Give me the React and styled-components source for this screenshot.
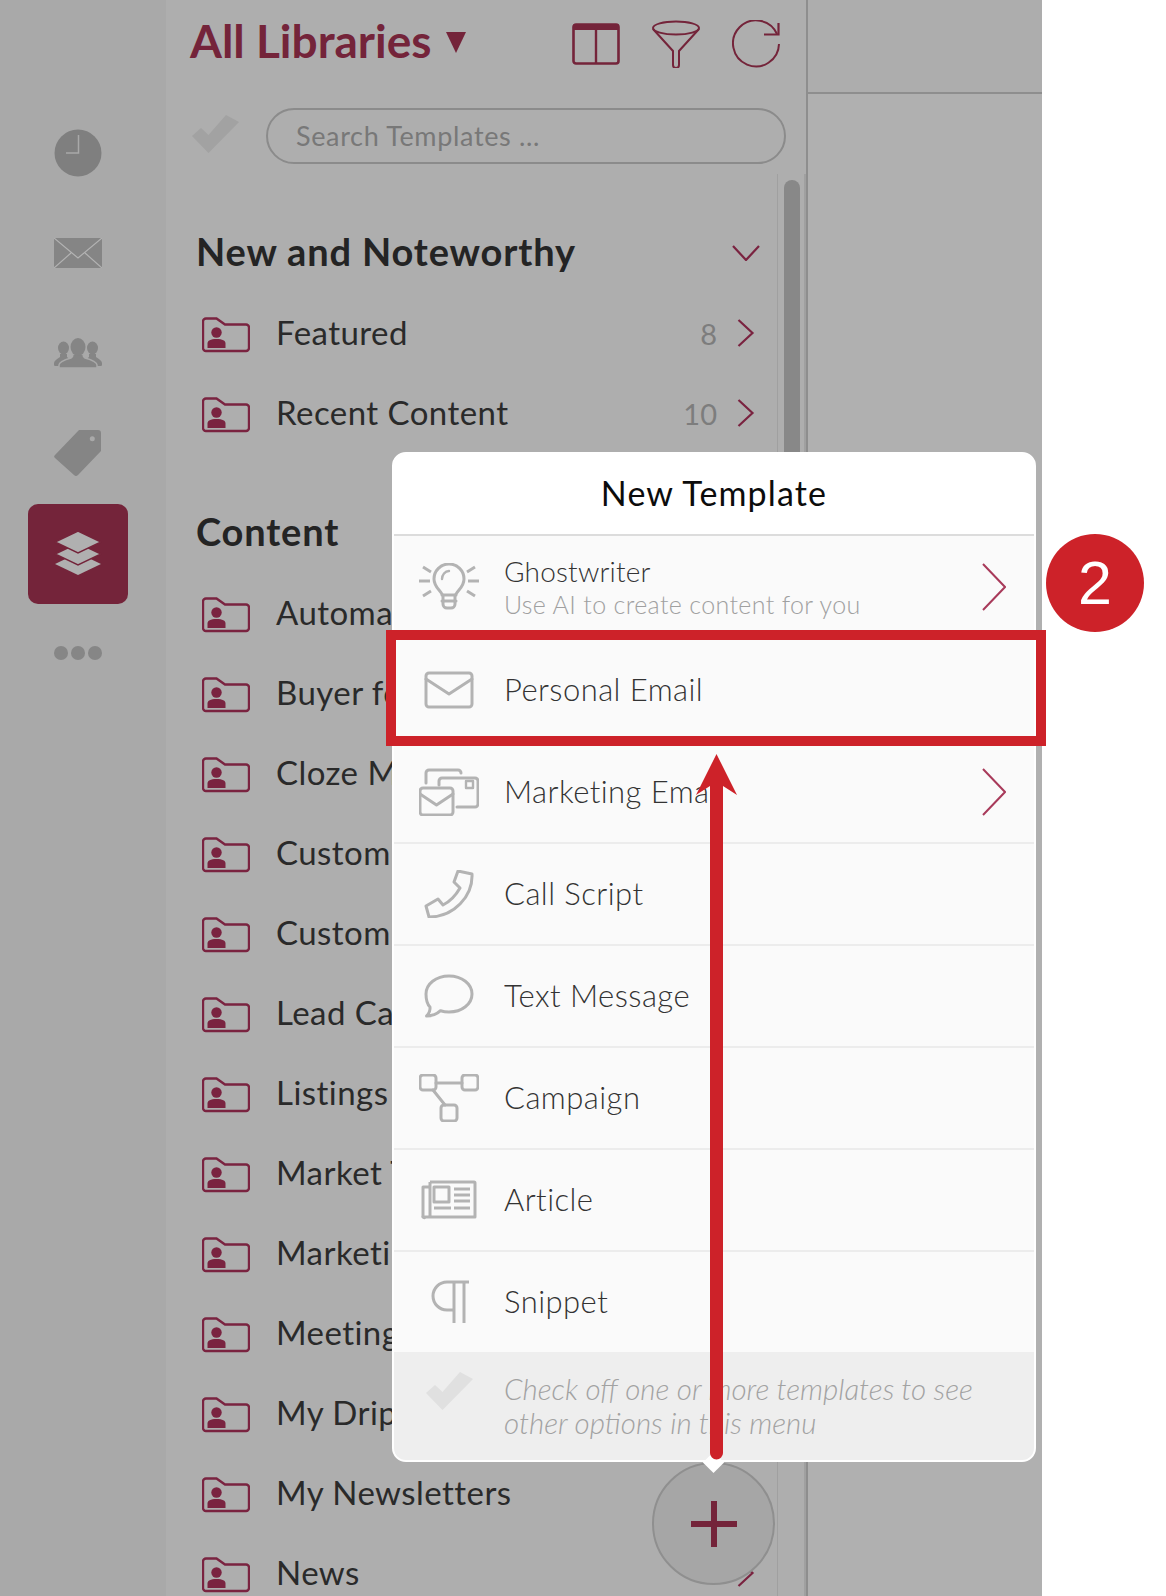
import React from "react";
import styled, { createGlobalStyle } from "styled-components";

const ACCENT = "#74243a";
const FONT = `"Lato", "Open Sans", "Liberation Sans", sans-serif`;

const Global = createGlobalStyle`
  html, body { margin: 0; padding: 0; background: #fff; }
  #root { width: 1166px; height: 1596px; }
`;

const Page = styled.div`
  position: relative;
  width: 1166px;
  height: 1596px;
  overflow: hidden;
  font-family: ${FONT};
  background: #fff;
`;
const Shell = styled.div`
  display: flex;
  width: 1042px;
  height: 1596px;
`;
const Rail = styled.nav`
  width: 166px;
  flex: none;
  box-sizing: border-box;
  padding: 103px 10px 0 0;
  background: #a9a9a9;
  display: flex;
  flex-direction: column;
  align-items: center;
`;
const RailSlot = styled.div`
  width: 100px;
  height: 100px;
  flex: none;
  margin-top: ${(p) => (p.$active ? 1 : 0)}px;
  display: flex;
  align-items: center;
  justify-content: center;
  border-radius: 10px;
  background: ${(p) => (p.$active ? ACCENT : "transparent")};
`;
const Dots = styled.div`
  display: flex;
  gap: 3px;
  margin-top: 42px;
`;
const Dot = styled.span`
  width: 14px;
  height: 14px;
  border-radius: 50%;
  background: #868686;
`;
const Panel = styled.section`
  width: 642px;
  flex: none;
  box-sizing: border-box;
  border-right: 2px solid #8e8e8e;
  background: #aeaeae;
  display: flex;
  flex-direction: column;
`;
const TitleBar = styled.header`
  height: 88px;
  flex: none;
  box-sizing: border-box;
  padding: 0 26px 0 24px;
  display: flex;
  align-items: center;
`;
const Title = styled.h1`
  margin: 0 0 7px;
  font-size: 46px;
  font-weight: 700;
  letter-spacing: 0;
  color: ${ACCENT};
  display: flex;
  align-items: center;
  gap: 15px;
  flex: 1;
  white-space: nowrap;
`;
const Caret = styled.span`
  width: 0;
  height: 0;
  border-left: 10.5px solid transparent;
  border-right: 10.5px solid transparent;
  border-top: 21px solid ${ACCENT};
  margin-top: 4px;
`;
const ToolGroup = styled.div`
  display: flex;
  align-items: center;
  gap: 32px;
`;
const SearchRow = styled.div`
  margin-top: 20px;
  padding-left: 26px;
  display: flex;
  align-items: center;
  gap: 26px;
`;
const SearchCheck = styled.span`
  margin-top: -5px;
`;
const SearchPill = styled.div`
  width: 520px;
  height: 56px;
  box-sizing: border-box;
  border: 2px solid #8b8b8b;
  border-radius: 28px;
  padding: 0 0 2px 28px;
  display: flex;
  align-items: center;
  font-size: 27px;
  letter-spacing: 0.65px;
  color: #787878;
`;
const Body = styled.div`
  margin-top: 10px;
  flex: 1;
  min-height: 0;
  display: flex;
  overflow: hidden;
`;
const List = styled.div`
  width: 611px;
  flex: none;
  box-sizing: border-box;
  padding: 0 22px 0 36px;
`;
const Section = styled.div`
  margin-top: 39px;
  & + & {
    margin-top: 40px;
  }
`;
const SectionHead = styled.div`
  height: 76px;
  padding-bottom: 4px;
  margin-left: -6px;
  margin-right: -5px;
  display: flex;
  align-items: center;
  justify-content: space-between;
  font-size: 38px;
  font-weight: 700;
  letter-spacing: 0.85px;
  color: #242424;
`;
const HeadChevron = styled.span`
  margin-top: 4px;
`;
const Row = styled.div`
  height: 80px;
  display: flex;
  align-items: center;
  font-size: 33px;
  color: #2a2a2a;
  white-space: nowrap;
`;
const FolderSlot = styled.span`
  margin-top: 4px;
`;
const RowLabel = styled.span`
  margin-left: 26px;
  padding-bottom: 2px;
  flex: 1;
  letter-spacing: 0.45px;
`;
const Count = styled.span`
  color: #7d7d7d;
  font-size: 29px;
  margin-right: 20px;
`;
const Track = styled.div`
  width: 29px;
  flex: none;
  box-sizing: border-box;
  border-left: 1px solid #a0a0a0;
  border-right: 2px solid #a0a0a0;
  padding: 6px 0 0 6px;
`;
const Thumb = styled.div`
  width: 16px;
  height: 900px;
  border-radius: 8px;
  background: #888;
`;
const RightCol = styled.div`
  flex: 1;
  background: #b0b0b0;
`;
const RightTop = styled.div`
  height: 92px;
  background: #adadad;
  border-bottom: 2px solid #8e8e8e;
`;

const Popup = styled.div`
  position: absolute;
  left: 392px;
  top: 452px;
  width: 644px;
  height: 1010px;
  box-sizing: border-box;
  border: 2px solid #fff;
  border-radius: 14px;
  background: #fafafa;
  display: flex;
  flex-direction: column;
  &::after {
    content: "";
    position: absolute;
    left: 312px;
    bottom: -10px;
    width: 15px;
    height: 15px;
    background: #fff;
    transform: rotate(45deg);
  }
`;
const PopHead = styled.div`
  height: 77px;
  padding-bottom: 3px;
  flex: none;
  background: #fff;
  border-radius: 12px 12px 0 0;
  border-bottom: 2px solid #dcdcdc;
  display: flex;
  align-items: center;
  justify-content: center;
  font-size: 34px;
  font-weight: 400;
  letter-spacing: 1.15px;
  color: #0c0c0c;
`;
const PopRow = styled.div`
  height: ${(p) => (p.$first ? 102 : 100)}px;
  flex: none;
  padding: 0 28px 0 25px;
  display: flex;
  align-items: center;
  gap: 25px;
  border-bottom: ${(p) => (p.$last ? "none" : "2px solid #ececec")};
`;
const PopText = styled.div`
  flex: ${(p) => (p.$clip ? "none" : 1)};
  width: ${(p) => (p.$clip ? "214px" : "auto")};
  overflow: hidden;
  white-space: nowrap;
  margin-right: ${(p) => (p.$clip ? "auto" : "0")};
  padding-bottom: 3px;
  font-size: 31px;
  font-weight: 300;
  line-height: 36px;
  letter-spacing: 0.45px;
  color: #333;
`;
const PopStack = styled.div`
  flex: 1;
  display: flex;
  flex-direction: column;
  color: #333;
`;
const PopName = styled.span`
  font-size: 28px;
  font-weight: 300;
  line-height: 34px;
  letter-spacing: 0.2px;
`;
const PopSub = styled.span`
  font-size: 25px;
  font-weight: 300;
  line-height: 32px;
  letter-spacing: 0.35px;
  color: #a0a0a0;
`;
const PopFoot = styled.div`
  flex: 1;
  padding-left: 25px;
  display: flex;
  align-items: center;
  gap: 25px;
  background: #eee;
  border-radius: 0 0 12px 12px;
  font-size: 29.5px;
  font-weight: 300;
  line-height: 34px;
  font-style: italic;
  color: #a2a2a2;
  white-space: nowrap;
`;
const FootCheck = styled.span`
  margin-bottom: 30px;
`;
const Frame = styled.div`
  position: absolute;
  left: 386px;
  top: 630px;
  width: 660px;
  height: 116px;
  box-sizing: border-box;
  border: 10px solid #cd2229;
  pointer-events: none;
`;
const Badge = styled.div`
  position: absolute;
  left: 1046px;
  top: 534px;
  width: 98px;
  height: 98px;
  border-radius: 50%;
  background: #cd2229;
  color: #fff;
  font-family: "Liberation Sans", sans-serif;
  font-size: 61px;
  display: flex;
  align-items: center;
  justify-content: center;
`;
const Fab = styled.div`
  position: absolute;
  left: 652px;
  top: 1462px;
  width: 123px;
  height: 123px;
  box-sizing: border-box;
  border: 2px solid #8f8f8f;
  border-radius: 50%;
  background: #a6a6a6;
  display: flex;
  align-items: center;
  justify-content: center;
`;
const ArrowLayer = styled.svg`
  position: absolute;
  left: 696px;
  top: 754px;
`;

const Ico = styled.svg`
  display: block;
  flex: none;
`;

const I = ({ w = 48, h = 48, vb, children, ...r }) => (
  <Ico width={w} height={h} viewBox={vb || `0 0 ${w} ${h}`} fill="none" {...r}>
    {children}
  </Ico>
);

const Folder = () => (
  <FolderSlot>
    <I w={48} h={36}>
      <path d="M4 1.500h10.500l8.500 6h21a3 3 0 0 1 3 3V31a3 3 0 0 1-3 3H4a3 3 0 0 1-3-3V4.500a3 3 0 0 1 3-3z" stroke="#7a2340" strokeWidth="2.400" />
      <circle cx="14.500" cy="15.500" r="5.200" fill="#7a2340" />
      <path d="M5.500 31v-4.500c0-3 3-4.500 9-4.500s9 1.500 9 4.500V31z" fill="#7a2340" />
    </I>
  </FolderSlot>
);
const ChevronRight = () => (
  <I w={18} h={28}>
    <path d="M1.500 1l14 13-14 13" stroke="#7a2340" strokeWidth="2.200" />
  </I>
);
const ChevronDown = () => (
  <HeadChevron>
    <I w={28} h={16}>
      <path d="M1 1l13 14 13-14" stroke="#7a2340" strokeWidth="2.200" />
    </I>
  </HeadChevron>
);
const Check = ({ fill }) => (
  <I w={48} h={40}>
    <path d="M0 22l9-8 7.500 7L34 1l13 7-30.500 31z" fill={fill} />
  </I>
);

const Clock = () => (
  <I>
    <circle cx="24" cy="24" r="23.500" fill="#7f7f7f" />
    <path d="M24.500 6v18H12" stroke="#a9a9a9" strokeWidth="1.500" />
  </I>
);
const RailMail = () => (
  <I h={30}>
    <rect x="0" y="0" width="48" height="30" fill="#858585" />
    <path d="M0 0l24 20L48 0M0 30l17-15M48 30L31 15" stroke="#b3b3b3" strokeWidth="1.200" />
  </I>
);
const People = () => (
  <I h={30}>
    <ellipse cx="9.500" cy="10" rx="5.500" ry="6.500" fill="#858585" />
    <ellipse cx="38.500" cy="10" rx="5.500" ry="6.500" fill="#858585" />
    <path d="M0 25c0-2 3-4 6-6v-3h7v3l4 3-12 6H2a2 2 0 0 1-2-3zM48 25c0-2-3-4-6-6v-3h-7v3l-4 3 12 6h3a2 2 0 0 0 2-3z" fill="#858585" />
    <path d="M5 30v-3c0-3 5-5 12-7 2-1 2-3 2-4h10c0 1 0 3 2 4 7 2 12 4 12 7v3z" fill="#858585" stroke="#a9a9a9" strokeWidth="1.500" />
    <ellipse cx="24" cy="9" rx="7.500" ry="9" fill="#858585" />
  </I>
);
const Tag = () => (
  <I>
    <path d="M25 1h19a3 3 0 0 1 3 3v18L24 46a3 3 0 0 1-4 0L1 29a2 2 0 0 1 0-3z" fill="#858585" />
    <circle cx="38.300" cy="9.700" r="2.500" fill="#a9a9a9" />
  </I>
);
const Stack = () => (
  <I>
    <path d="M24 23l23 11-23 11L1 34z" fill="#b0b0b0" />
    <path d="M24 13l23 11-23 11L1 24z" fill="#b0b0b0" stroke={ACCENT} strokeWidth="1.500" />
    <path d="M24 1l23 11-23 11L1 12z" fill="#b0b0b0" stroke={ACCENT} strokeWidth="1.500" />
  </I>
);
const Columns = () => (
  <I h={42}>
    <rect x="1.500" y="1.500" width="45" height="39" rx="2.500" stroke={ACCENT} strokeWidth="2.600" />
    <rect x="1.500" y="1.500" width="45" height="5.500" fill={ACCENT} />
    <path d="M24 5v35" stroke={ACCENT} strokeWidth="2.400" />
  </I>
);
const Funnel = () => (
  <I>
    <ellipse cx="24" cy="8" rx="23" ry="6.500" stroke={ACCENT} strokeWidth="2" />
    <path d="M1 9l20 22v14a3 3 0 0 0 6 0V31L47 9" stroke={ACCENT} strokeWidth="2" />
  </I>
);
const Refresh = () => (
  <I>
    <path d="M47 24A23 23 0 1 1 45 14" stroke={ACCENT} strokeWidth="2" />
    <path d="M32 14.500h14.500V3" stroke={ACCENT} strokeWidth="2.200" />
  </I>
);

const G = { stroke: "#b3b3b3", strokeWidth: 3, strokeLinejoin: "round", strokeLinecap: "round" };
const Bulb = () => (
  <I w={60} h={48}>
    <g {...G}>
      <path d="M23 32c0-4-8-7-8-16a15 15 0 0 1 30 0c0 9-8 12-8 16z" />
      <path d="M23 16c0-4 3-8 7-8" strokeWidth="2.400" />
      <path d="M23 38h14M24 32v9a4 4 0 0 0 4 4h4a4 4 0 0 0 4-4v-9" />
      <path d="M0 18h11M4 4l8 5M4 33l8-5M49 18h11M56 4l-8 5M56 33l-8-5" strokeLinecap="butt" />
    </g>
  </I>
);
const PopMail = () => (
  <I w={60} h={48}>
    <g {...G}>
      <rect x="7" y="7" width="46" height="34" rx="3" />
      <path d="M7 13l23 15 23-15" />
    </g>
  </I>
);
const Marketing = () => (
  <I w={60} h={48}>
    <g {...G}>
      <rect x="1" y="20" width="33" height="27" rx="3" />
      <path d="M1 26l16.500 11L34 26" />
      <path d="M20 17v-4a3 3 0 0 1 3-3h33a3 3 0 0 1 3 3v23a3 3 0 0 1-3 3H38" />
      <path d="M7 15V5a3 3 0 0 1 3-3h29a3 3 0 0 1 3 3" />
      <rect x="47" y="13" width="7" height="7" strokeWidth="2.400" />
    </g>
  </I>
);
const Phone = () => (
  <I w={60} h={48}>
    <path transform="translate(6 0)" d="M33 1l14 3c1 22-18 43-43 43L1 36l12-7 5 6c6-3 13-10 17-17l-6-6z" {...G} />
  </I>
);
const Bubble = () => (
  <I w={60} h={48}>
    <path d="M30 4c13 0 23 8 23 18s-10 18-23 18c-3 0-6-.5-8.500-1.300C17 43 12 44 7.500 44c2-2 4-5 3.500-9-3-3-4-8-4-13C7 12 17 4 30 4z" {...G} />
  </I>
);
const Campaign = () => (
  <I w={60} h={48}>
    <g {...G}>
      <rect x="1" y="1" width="16" height="15" rx="3" />
      <rect x="43" y="1" width="16" height="15" rx="3" />
      <rect x="22" y="31" width="16" height="16" rx="3" />
      <path d="M17 9h26M14 16l12 15" />
    </g>
  </I>
);
const Article = () => (
  <I w={60} h={48}>
    <g stroke="#b3b3b3" strokeWidth="3" strokeLinejoin="round">
      <path d="M11 6h44a1 1 0 0 1 1 1v34H6a1 1 0 0 1-2-1V11h7M11 6v35" />
      <rect x="15" y="11" width="15" height="15" />
      <path d="M35 13h16M35 19h16M35 25h16M15 32h17M35 32h16" />
    </g>
  </I>
);
const Snippet = () => (
  <I w={60} h={48}>
    <path d="M50 4H28a14 14 0 0 0 0 28h6M35 4v41M45 4v41" stroke="#b3b3b3" strokeWidth="3" />
  </I>
);
const PopChevron = () => (
  <I w={24} h={48}>
    <path d="M1 1l22 23L1 47" stroke="#a83a5a" strokeWidth="2" />
  </I>
);

const topRows = [["Featured", "8"], ["Recent Content", "10"]];
const contentRows = [
  "Automations", "Buyer focused", "Cloze Marketing", "Custom Cards", "Custom Emails",
  "Lead Capture", "Listings", "Market Trends", "Marketing", "Meetings", "My Drip",
  "My Newsletters", "News",
];
const menu = [
  { label: "Personal Email", Icon: PopMail },
  { label: "Marketing Email", Icon: Marketing, more: true },
  { label: "Call Script", Icon: Phone },
  { label: "Text Message", Icon: Bubble },
  { label: "Campaign", Icon: Campaign },
  { label: "Article", Icon: Article },
];

export default function App() {
  return (
    <Page>
      <Global />
      <Shell>
        <Rail>
          <RailSlot><Clock /></RailSlot>
          <RailSlot><RailMail /></RailSlot>
          <RailSlot><People /></RailSlot>
          <RailSlot><Tag /></RailSlot>
          <RailSlot $active><Stack /></RailSlot>
          <Dots><Dot /><Dot /><Dot /></Dots>
        </Rail>
        <Panel>
          <TitleBar>
            <Title>All Libraries <Caret /></Title>
            <ToolGroup>
              <Columns />
              <Funnel />
              <Refresh />
            </ToolGroup>
          </TitleBar>
          <SearchRow>
            <SearchCheck><Check fill="#a2a2a2" /></SearchCheck>
            <SearchPill>Search Templates ...</SearchPill>
          </SearchRow>
          <Body>
            <List>
              <Section>
                <SectionHead>New and Noteworthy <ChevronDown /></SectionHead>
                {topRows.map(([name, n]) => (
                  <Row key={name}>
                    <Folder />
                    <RowLabel>{name}</RowLabel>
                    <Count>{n}</Count>
                    <ChevronRight />
                  </Row>
                ))}
              </Section>
              <Section>
                <SectionHead>Content</SectionHead>
                {contentRows.map((name) => (
                  <Row key={name}>
                    <Folder />
                    <RowLabel>{name}</RowLabel>
                    <ChevronRight />
                  </Row>
                ))}
              </Section>
            </List>
            <Track><Thumb /></Track>
          </Body>
        </Panel>
        <RightCol><RightTop /></RightCol>
      </Shell>

      <Fab>
        <I>
          <path d="M24 1v46M1 24h46" stroke={ACCENT} strokeWidth="6" />
        </I>
      </Fab>

      <Popup>
        <PopHead>New Template</PopHead>
        <PopRow $first>
          <Bulb />
          <PopStack>
            <PopName>Ghostwriter</PopName>
            <PopSub>Use AI to create content for you</PopSub>
          </PopStack>
          <PopChevron />
        </PopRow>
        {menu.map(({ label, Icon, more }) => (
          <PopRow key={label}>
            <Icon />
            <PopText $clip={more}>{label}</PopText>
            {more && <PopChevron />}
          </PopRow>
        ))}
        <PopRow $last>
          <Snippet />
          <PopText>Snippet</PopText>
        </PopRow>
        <PopFoot>
          <FootCheck>
            <I w={60} h={40}>
              <g transform="translate(7 0)"><path d="M0 22l9-8 7.500 7L34 1l13 7-30.500 31z" fill="#e0e0e0" /></g>
            </I>
          </FootCheck>
          <span>Check off one or more templates to see<br />other options in this menu</span>
        </PopFoot>
      </Popup>

      <Frame />
      <Badge>2</Badge>
      <ArrowLayer width="42" height="706" viewBox="0 0 42 706">
        <path d="M20.500 0L41 41 27 32v667a6.500 6.500 0 0 1-13 0V32L0 41z" fill="#cd2229" />
      </ArrowLayer>
    </Page>
  );
}
